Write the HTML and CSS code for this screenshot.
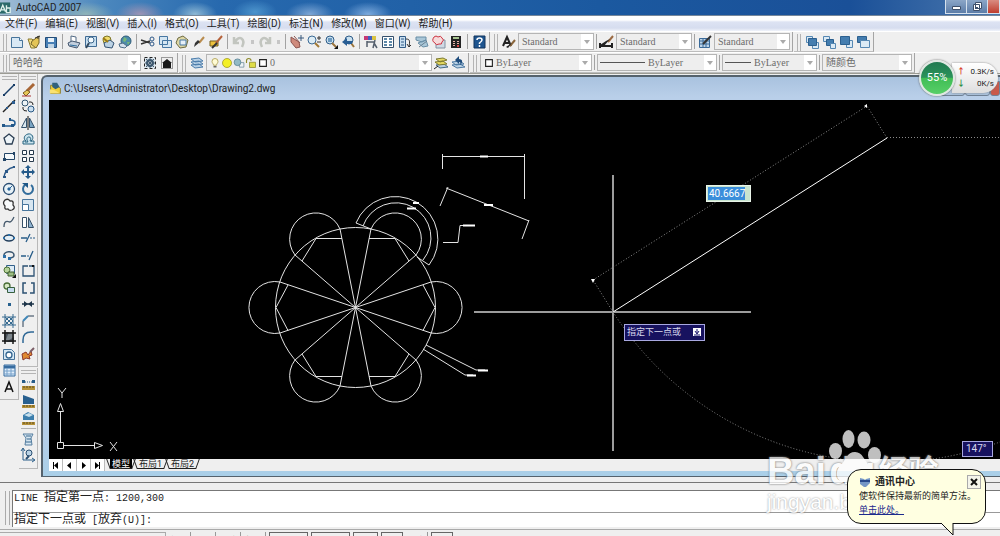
FILE: index.html
```
<!DOCTYPE html>
<html lang="zh-CN">
  <head>
    <meta charset="UTF-8" />
    <meta name="viewport" content="width=device-width, initial-scale=1.0" />
    <title>AutoCAD 2007</title>
    <link rel="stylesheet" href="styles.css">
  </head>
  <body>
    <!-- 图标库，每个图标都是 16x16 -->
    <svg class="sprite" aria-hidden="true">
      <symbol id="new" viewBox="0 0 16 16"><path d="M2.500 3.500h8l3 3v7h-11z" fill="#d8e8f4" stroke="#47749b"/><path d="M10.500 3.500v3h3" fill="#fff" stroke="#47749b"/></symbol>
      <symbol id="open" viewBox="0 0 16 16"><path d="M2 5h4l1 1h5l-3 8H5z" fill="#efd97c" stroke="#8a7a32"/><path d="M6 7l7-5v7l-3 5-5-4z" fill="#e3c456" stroke="#77672b"/><path d="M9 4l5-2M12 2v3" stroke="#333"/></symbol>
      <symbol id="save" viewBox="0 0 16 16"><path d="M2.500 3.500h11v10h-11z" fill="#477fb5" stroke="#234d78"/><path d="M5 4h6v4H5z" fill="#e8f1f8"/><path d="M5 10h6v4H5z" fill="#c0d4e4"/></symbol>
      <symbol id="print" viewBox="0 0 16 16"><path d="M5 8V2l5 1v5" fill="#fff" stroke="#536b85"/><path d="M2 9l4-2 8 2-3 5-8-2z" fill="#c3cfdd" stroke="#43556d"/><path d="M4 11l7 1" stroke="#2f6e9e"/></symbol>
      <symbol id="preview" viewBox="0 0 16 16"><path d="M2.500 2.500h11v10h-11z" fill="#c8dff0" stroke="#406b94"/><circle cx="8" cy="6" r="3" fill="#f4fbff" stroke="#3d668b"/><path d="M6 9l-3 5" stroke="#33485c" stroke-width="2"/></symbol>
      <symbol id="publish" viewBox="0 0 16 16"><circle cx="7" cy="6" r="4" fill="#f0dc6a" stroke="#7c7428"/><path d="M4 9l6-3 4 3-2 5-7-1z" fill="#bcd2e4" stroke="#335272"/><path d="M3 4l5 4" stroke="#9b7a16" stroke-width="2"/></symbol>
      <symbol id="web" viewBox="0 0 16 16"><circle cx="9" cy="7" r="5" fill="#4b8bab" stroke="#315d7a"/><path d="M7 3l3 2-2 3-2-1zM10 8l3 0-2 3z" fill="#77b777"/><path d="M2 10l4-1 4 3-2 2-5-1z" fill="#d4e1ec" stroke="#4d6d89"/></symbol>
      <symbol id="cut" viewBox="0 0 16 16"><path d="M1 6l9 3M1 10l9-3" stroke="#333" stroke-width="1.500"/><circle cx="12" cy="5" r="2" fill="none" stroke="#2d5787"/><circle cx="12" cy="10" r="2" fill="none" stroke="#2d5787"/></symbol>
      <symbol id="copy" viewBox="0 0 16 16"><path d="M2.500 2.500h8v8h-8zM5.500 6.500h9v7h-9z" fill="#d5e6f2" stroke="#4777a2"/></symbol>
      <symbol id="paste" viewBox="0 0 16 16"><path d="M4 4l5-2 5 4-2 7-6 1-4-5z" fill="#ded7a4" stroke="#6e6b42"/><path d="M6 6h6v5H6z" fill="#e6f0f8" stroke="#4777a2"/></symbol>
      <symbol id="match" viewBox="0 0 16 16"><path d="M13 3L8 9" stroke="#b98c4e" stroke-width="2"/><path d="M9 8l-6 5 1-4 3-3z" fill="#333"/></symbol>
      <symbol id="blockedit" viewBox="0 0 16 16"><path d="M2 7h8v5H2z" fill="#ecc13c" stroke="#745e1a"/><path d="M14 2L8 9" stroke="#b5623b" stroke-width="2"/><path d="M4 14l5-5" stroke="#333" stroke-width="2"/></symbol>
      <symbol id="undo" viewBox="0 0 16 16"><path d="M3 3v6h5M4 8c4-8 11-3 7 5" fill="none" stroke="#c2c5bf" stroke-width="2.500"/></symbol>
      <symbol id="redo" viewBox="0 0 16 16"><path d="M13 3v6H8M12 8c-4-8-11-3-7 5" fill="none" stroke="#c2c5bf" stroke-width="2.500"/></symbol>
      <symbol id="pan" viewBox="0 0 16 16"><path d="M2 3l8 5 1 5-4 1-5-6zM5 2l6 7" fill="#cf8b7d" stroke="#8c5550"/><path d="M12 1v6M9 4h6" stroke="#38597d"/></symbol>
      <symbol id="zoom" viewBox="0 0 16 16"><circle cx="6" cy="6" r="4" fill="#dcecf5" stroke="#3c6a95"/><path d="M9 9l4 4" stroke="#a37a34" stroke-width="2"/><path d="M11 4h4M13 2v4M11 8h4" stroke="#333"/></symbol>
      <symbol id="zoomwin" viewBox="0 0 16 16"><circle cx="7" cy="6" r="4" fill="#c9e0ef" stroke="#2f5c88"/><path d="M5 4h4v4H5z" fill="#6c9abf"/><path d="M9 9l4 4" stroke="#9b743b" stroke-width="2"/><path d="M15 11v4h-4z" fill="#111"/></symbol>
      <symbol id="zoomprev" viewBox="0 0 16 16"><circle cx="9" cy="6" r="4" fill="#c9e0ef" stroke="#2f5c88"/><path d="M11 9l3 4" stroke="#9b743b" stroke-width="2"/><path d="M2 8l5-4v3h5v3H7v2z" fill="#285d93"/></symbol>
      <symbol id="props" viewBox="0 0 16 16"><path d="M1 2h4v4H1z" fill="#c53a75"/><path d="M5 2h4v4H5z" fill="#405fc1"/><path d="M9 2h4v4H9z" fill="#d9c342"/><path d="M4 8h8M12 6l-2 8M11 9l3 5M4 7v6" fill="none" stroke="#55606e" stroke-width="1.500"/></symbol>
      <symbol id="center" viewBox="0 0 16 16"><path d="M2.500 2.500h11v11h-11z" fill="#fff" stroke="#344f6c"/><path d="M4 4h3v2H4zM9 4h3v2H9zM4 7h3v2H4zM9 7h3v2H9zM4 10h3v2H4zM9 10h3v2H9z" fill="#5d88a8"/></symbol>
      <symbol id="palette" viewBox="0 0 16 16"><path d="M2.500 2.500h6v11h-6z" fill="#c9dff0" stroke="#315b86"/><path d="M4 5h3M4 8h3M4 11h3" stroke="#315b86"/><path d="M9 5c4 0 4 2 3 8M10 10l2 3 2-2" fill="none" stroke="#333"/></symbol>
      <symbol id="sheet" viewBox="0 0 16 16"><path d="M2 3h10v3l-4 2-6-2zM4 9l8-3 2 6-5 1z" fill="#aac7d8" stroke="#698ea6"/><path d="M5 13l8-6" stroke="#687f90"/></symbol>
      <symbol id="markup" viewBox="0 0 16 16"><path d="M5 6h9v8H5z" fill="#cfdae4" stroke="#8393a4"/><path d="M3 3q2-2 4 0 3-2 4 1 3 2 0 4 0 3-3 2-3 2-4-1-4-2-1-6z" fill="#f6dada" stroke="#cd3442"/></symbol>
      <symbol id="calc" viewBox="0 0 16 16"><path d="M3 2h10v12H3z" fill="#222"/><path d="M5 3h6v2H5z" fill="#a7c491"/><path d="M5 7h2v1H5zM9 7h2v1H9zM5 9h2v1H5zM9 9h2v1H9zM5 11h2v1H5z" fill="#e5b3a7"/><path d="M9 11h2v2H9z" fill="#d44"/></symbol>
      <symbol id="help" viewBox="0 0 16 16"><path d="M3 2h11v12H3z" fill="#1e558f" stroke="#12355d"/><path d="M6 6q0-2 2.500-2T11 6q0 1-2.500 3v1M8.500 11v2" fill="none" stroke="#fff" stroke-width="1.500"/></symbol>
      <symbol id="textstyle" viewBox="0 0 16 16"><path d="M2 12L6 3l4 9M4 9h5" fill="none" stroke="#222" stroke-width="2"/><path d="M14 6l-5 6" stroke="#8a653b" stroke-width="2"/><path d="M11 9l-4 5-2-1z" fill="#222"/></symbol>
      <symbol id="dimstyle" viewBox="0 0 16 16"><path d="M1 9v5M13 9v5M1 12h12" stroke="#222" stroke-width="2"/><path d="M14 2L9 8" stroke="#9b6a43" stroke-width="2"/><path d="M11 5l-6 7-4-1 6-4z" fill="#222"/></symbol>
      <symbol id="tabstyle" viewBox="0 0 16 16"><path d="M2.500 4.500h10v9h-10zM3 7h9M3 10h9M6 5v8M9 5v8" fill="#bed5e9" stroke="#3b6b9a"/><path d="M14 2L6 10" stroke="#333" stroke-width="2"/></symbol>
      <symbol id="front" viewBox="0 0 16 16"><path d="M2.500 2.500h6v6h-6zM8.500 8.500h6v6h-6z" fill="#dbeaf5" stroke="#5688b3"/><path d="M4.500 4.500h8v7h-8z" fill="#447daf" stroke="#2c608f"/></symbol>
      <symbol id="above" viewBox="0 0 16 16"><path d="M2.500 2.500h6v5h-6z" fill="#dbeaf5" stroke="#5688b3"/><path d="M5.500 5.500h7v6h-7z" fill="#447daf" stroke="#2c608f"/><path d="M9.500 9.500h5v5h-5z" fill="#dbeaf5" stroke="#5688b3"/></symbol>
      <symbol id="back" viewBox="0 0 16 16"><path d="M8.500 6.500h6v7h-6z" fill="#dbeaf5" stroke="#5688b3"/><path d="M2.500 2.500h9v8h-9z" fill="#447daf" stroke="#2c608f"/></symbol>
      <symbol id="under" viewBox="0 0 16 16"><path d="M2.500 2.500h9v6h-9z" fill="#447daf" stroke="#2c608f"/><path d="M5.500 6.500h9v7h-9z" fill="#dbeaf5" stroke="#5688b3"/></symbol>
      <symbol id="gear" viewBox="0 0 16 16"><path d="M2.500 2.500h11v11h-11z" fill="#dde7ee" stroke="#222" stroke-dasharray="3 2"/><circle cx="8" cy="8" r="3" fill="#fff" stroke="#3f596f" stroke-width="2"/><path d="M8 3v10M3 8h10M4 4l8 8M12 4l-8 8" stroke="#3f596f"/></symbol>
      <symbol id="house" viewBox="0 0 16 16"><path d="M2.500 2.500h11v11h-11z" fill="#eee" stroke="#444" stroke-dasharray="1 1"/><path d="M3 8l5-4 5 4h-1v5H4V8z" fill="#181818"/></symbol>
      <symbol id="layers" viewBox="0 0 16 16"><path d="M2 10l8-1 4 3-8 1zM2 7l8-1 4 3-8 1zM2 4l8-1 4 3-8 1z" fill="#b9d2e7" stroke="#4c7dab"/></symbol>
      <symbol id="layermake" viewBox="0 0 16 16"><path d="M3 10l8-1 4 3-8 1z" fill="#b9cfe0" stroke="#456a88"/><path d="M2 7l8-1 4 3-8 1zM3 4l7-1 4 2-7 2z" fill="#e4d860" stroke="#7d7a30"/><path d="M1 14l4-3" stroke="#222"/></symbol>
      <symbol id="layerprev" viewBox="0 0 16 16"><path d="M2 10l8-1 5 3-8 1zM2 7l8-1 4 3-8 1z" fill="#bcd3e6" stroke="#4e7ba4"/><path d="M5 5l4-4v3c4 0 4 4 1 6 1-3 0-3-1-3v2z" fill="#1e4c7c"/></symbol>
      <symbol id="bulb" viewBox="0 0 16 16"><path d="M6 11c0-2-2-3-2-5a4 4 0 018 0c0 2-2 3-2 5z" fill="#fffbd4" stroke="#a2923c"/><path d="M6 13h4" stroke="#666" stroke-width="2"/></symbol>
      <symbol id="sun" viewBox="0 0 16 16"><circle cx="8" cy="8" r="6" fill="#f3ef26" stroke="#9b9420"/></symbol>
      <symbol id="sunvp" viewBox="0 0 16 16"><path d="M8.500 7.500h6v6h-6z" fill="#edf3f6" stroke="#6a8799"/><circle cx="6" cy="7" r="4.500" fill="#93bac6" stroke="#567f91"/></symbol>
      <symbol id="lock" viewBox="0 0 16 16"><path d="M2 8V5q0-3 3-3t3 3" fill="none" stroke="#8d8a2c" stroke-width="1.500"/><path d="M6 7h8v7H6z" fill="#dfdc47" stroke="#8d8a2c"/></symbol>
      <symbol id="swatch" viewBox="0 0 16 16"><path d="M3.500 3.500h9v9h-9z" fill="#fff" stroke="#222" stroke-width="1.500"/></symbol>

      <symbol id="line" viewBox="0 0 16 16"><path d="M3 13L13 3" stroke="#173c66" stroke-width="1.500"/><path d="M2 12h2v2H2zM12 2h2v2h-2z" fill="#173c66"/></symbol>
      <symbol id="xline" viewBox="0 0 16 16"><path d="M2 14L14 2" stroke="#222" stroke-width="1.500"/><path d="M5 9h2v2H5zM11 3h3v3h-3z" fill="#2b5d91"/></symbol>
      <symbol id="pline" viewBox="0 0 16 16"><path d="M3 11h8q3 0 3-3t-5-3" fill="none" stroke="#1f5b93" stroke-width="1.500"/><path d="M1 9h3v3H1zM10 9h3v3h-3zM8 3h2v3H8z" fill="#235788"/></symbol>
      <symbol id="polygon" viewBox="0 0 16 16"><path d="M8 3l5 4-2 6H5L3 7z" fill="#edf4f8" stroke="#2b3e53" stroke-width="1.300"/></symbol>
      <symbol id="rect" viewBox="0 0 16 16"><path d="M3.500 5.500h10v6h-10z" fill="#f4f8fa" stroke="#234567"/><path d="M2 10h3v3H2zM12 4h2v3h-2z" fill="#234567"/></symbol>
      <symbol id="arc" viewBox="0 0 16 16"><path d="M3 13Q4 5 13 3" fill="none" stroke="#2b5888" stroke-width="1.500"/><path d="M2 12h3v2H2zM4 6h3v3H4zM12 2h2v2h-2z" fill="#2b5888"/></symbol>
      <symbol id="circle" viewBox="0 0 16 16"><circle cx="8" cy="8" r="5.500" fill="#e8f2f7" stroke="#274b71" stroke-width="1.300"/><path d="M8 8l3-3M7 7h2v2H7z" fill="#27649b" stroke="#27649b"/></symbol>
      <symbol id="cloud" viewBox="0 0 16 16"><path d="M4 3q3-2 5 1 4-1 3 4 3 3-1 5-3 1-4-1-4 1-3-3-3-3 0-6z" fill="#f8fafb" stroke="#333" stroke-width="1.300"/></symbol>
      <symbol id="spline" viewBox="0 0 16 16"><path d="M3 13C3 5 8 8 9 8s2-1 4-5" fill="none" stroke="#43576a" stroke-width="1.300"/></symbol>
      <symbol id="ellipse" viewBox="0 0 16 16"><ellipse cx="8" cy="8" rx="5" ry="3" fill="#e2edf4" stroke="#223e5c" stroke-width="1.500"/><path d="M2 7h2v2H2zM12 7h2v2h-2zM7 4h2v2H7z" fill="#2e70a8"/></symbol>
      <symbol id="ellarc" viewBox="0 0 16 16"><path d="M3 9C2 4 13 3 13 8q0 3-5 3" fill="none" stroke="#3a5670" stroke-width="1.500"/><path d="M2 8h3v3H2zM7 10h3v3H7z" fill="#2e70a8"/></symbol>
      <symbol id="insert" viewBox="0 0 16 16"><path d="M5.500 2.500h8v8h-8z" fill="#deecf6" stroke="#315f8a"/><circle cx="6" cy="7" r="3" fill="#b6d39a" stroke="#4f7337"/><path d="M7 9h6v4H7z" fill="#9dbd82" stroke="#416031"/><path d="M15 11v4h-4z" fill="#111"/></symbol>
      <symbol id="block" viewBox="0 0 16 16"><circle cx="6" cy="6" r="3" fill="#d8e8c5" stroke="#496d35" stroke-width="1.300"/><path d="M6.500 7.500h7v5h-7z" fill="#c7dcf0" stroke="#37603d"/></symbol>
      <symbol id="point" viewBox="0 0 16 16"><path d="M7 7h3v3H7z" fill="#26608e"/></symbol>
      <symbol id="hatch" viewBox="0 0 16 16"><path d="M4 1v14M12 1v14M1 4h14M1 12h14M4 8l4-4M4 12l8-8M8 12l4-4M4 4l8 8M8 4l4 4M4 8l4 4" stroke="#376b91"/></symbol>
      <symbol id="gradient" viewBox="0 0 16 16"><path d="M3 3h10v10H3z" fill="#49525b"/><path d="M8 3h5v5L5 13H4z" fill="#7c858b"/><path d="M4 1v14M12 1v14M1 4h14M1 12h14" stroke="#191919" stroke-width="1.500"/></symbol>
      <symbol id="region" viewBox="0 0 16 16"><path d="M2.500 3.500h8l3 3v7h-11z" fill="#d6e8f4" stroke="#477399"/><circle cx="8" cy="9" r="3" fill="#fff" stroke="#32648f" stroke-width="1.300"/></symbol>
      <symbol id="table" viewBox="0 0 16 16"><path d="M3 3h11v11H3z" fill="#e0eefb" stroke="#376ca0"/><path d="M3 5h11" stroke="#376ca0" stroke-width="3"/><path d="M6 6v8M10 6v8M3 9h11M3 12h11" stroke="#76a1ca"/></symbol>
      <symbol id="mtext" viewBox="0 0 16 16"><path d="M4 13L8 3l4 10M5 10h6" fill="none" stroke="#111" stroke-width="1.500"/></symbol>

      <symbol id="erase" viewBox="0 0 16 16"><path d="M14 2L7 9" stroke="#a96736" stroke-width="3"/><path d="M3 11l4-3 3 2-4 4z" fill="#e5c758" stroke="#7b5a22"/><path d="M2 14h9" stroke="#a33"/></symbol>
      <symbol id="copyobj" viewBox="0 0 16 16"><circle cx="5" cy="5" r="3" fill="#edf3f6" stroke="#30536f"/><circle cx="11" cy="11" r="3" fill="#cce0f0" stroke="#285783"/><path d="M9 4h2q2 0 2 3M3 9v2q0 2 4 2" fill="none" stroke="#222"/></symbol>
      <symbol id="mirror" viewBox="0 0 16 16"><path d="M6.500 3v9.500h-5z" fill="#dbe8f0" stroke="#34516b"/><path d="M9.500 3v9.500h5z" fill="#7ba6c5" stroke="#34516b"/><path d="M8 1v14" stroke="#111"/></symbol>
      <symbol id="offset" viewBox="0 0 16 16"><path d="M3 13h11v-3H11c4-3 1-8-3-7S3 8 6 10H3z" fill="#cce4ee" stroke="#296480"/><path d="M5 11h3c-2-3-1-5 1-5s2 2 1 4h2" fill="none" stroke="#296480"/></symbol>
      <symbol id="array" viewBox="0 0 16 16"><path d="M2.500 2.500h4v4h-4zM9.500 2.500h4v4h-4zM2.500 9.500h4v4h-4zM9.500 9.500h4v4h-4z" fill="#fff" stroke="#26394b"/></symbol>
      <symbol id="move" viewBox="0 0 16 16"><path d="M8 3v10M3 8h10" stroke="#255a89" stroke-width="2"/><path d="M8 1l3 3H5zM8 15l3-3H5zM1 8l3-3v6zM15 8l-3-3v6z" fill="#255a89"/></symbol>
      <symbol id="rotate" viewBox="0 0 16 16"><path d="M5 4a5 5 0 106 0" fill="none" stroke="#326d9c" stroke-width="2"/><path d="M2 2h6v5z" fill="#1f5787"/></symbol>
      <symbol id="scale" viewBox="0 0 16 16"><path d="M2.500 2.500h11v11h-11z" fill="#d7e6f1" stroke="#47759c"/><path d="M2.500 7.500h6v6h-6z" fill="#fff" stroke="#47759c"/></symbol>
      <symbol id="stretch" viewBox="0 0 16 16"><path d="M2.500 3.500h4v10h-4z" fill="#fff" stroke="#365068"/><path d="M8.500 3.500l5 10h-5z" fill="#8db1cf" stroke="#365068"/></symbol>
      <symbol id="trim" viewBox="0 0 16 16"><path d="M1 8h6M10 4L6 12" stroke="#285d89" stroke-width="1.300"/><path d="M10 8h5" stroke="#285d89" stroke-dasharray="2 1"/></symbol>
      <symbol id="extend" viewBox="0 0 16 16"><path d="M1 9h5M13 4l-4 9" stroke="#285d89" stroke-width="1.300"/><path d="M7 9h4" stroke="#285d89" stroke-dasharray="2 1"/></symbol>
      <symbol id="breakpt" viewBox="0 0 16 16"><path d="M8 3H3v10h11V3H9" fill="none" stroke="#2d5273" stroke-width="1.300"/><path d="M12 2h2v2h-2z" fill="#111"/></symbol>
      <symbol id="break" viewBox="0 0 16 16"><path d="M6 3H3v10h11V3h-3" fill="none" stroke="#2d5273" stroke-width="1.500"/><path d="M7 12h3v2H7z" fill="#efefef"/></symbol>
      <symbol id="join" viewBox="0 0 16 16"><path d="M2 8h12" stroke="#1d3449" stroke-width="1.500"/><path d="M4 5l4 3-4 3zM12 5L8 8l4 3z" fill="#1d3449"/></symbol>
      <symbol id="chamfer" viewBox="0 0 16 16"><path d="M3 14V8l5-5h6" fill="none" stroke="#2a3f54"/><path d="M3 8l5-5" stroke="#4187b8" stroke-width="2"/></symbol>
      <symbol id="fillet" viewBox="0 0 16 16"><path d="M3 14V11q0-8 8-8h3" fill="none" stroke="#2f6896" stroke-width="1.500"/></symbol>
      <symbol id="explode" viewBox="0 0 16 16"><path d="M2 8l4-2 2 3 3-4 1 4-3 1 1 3-4-1-3 2z" fill="#e08b32" stroke="#8d392c"/><path d="M10 6l4-4" stroke="#7b5d66" stroke-width="2"/></symbol>
      <symbol id="dist" viewBox="0 0 16 16"><path d="M3 5h11" stroke="#285d89" stroke-dasharray="1 1"/><path d="M2 3h3v3H2zM12 3h3v3h-3z" fill="#285d89"/><path d="M2 9h13v4H2z" fill="#b5923a"/><path d="M4 9v2M7 9v2M10 9v2M13 9v2" stroke="#5d4b1e"/></symbol>
      <symbol id="area" viewBox="0 0 16 16"><path d="M3 2l11 4v5H3z" fill="#28608f"/><path d="M2 12h13v3H2z" fill="#b5923a"/><path d="M4 12v2M7 12v2M10 12v2M13 12v2" stroke="#5d4b1e"/></symbol>
      <symbol id="mass" viewBox="0 0 16 16"><path d="M3 5l5-3 6 3v5H3z" fill="#3c7eac"/><path d="M4 5l5-2 4 2-4 2z" fill="#c6dfec"/><path d="M2 12h13v3H2z" fill="#b5923a"/><path d="M4 12v2M7 12v2M10 12v2M13 12v2" stroke="#5d4b1e"/></symbol>
      <symbol id="list" viewBox="0 0 16 16"><path d="M3 3h10l-2 4 1 7H5l1-7z" fill="#d6e6f1" stroke="#547d9f"/><path d="M6 5h5M7 8h4M6 11h5" stroke="#37678d"/></symbol>
      <symbol id="idpoint" viewBox="0 0 16 16"><path d="M3 2v11h11M1 4l2-3 2 3M12 11l3 2-3 2" fill="none" stroke="#2a5e89"/><circle cx="9" cy="6" r="3" fill="#bad3e5" stroke="#2a4e71"/><path d="M9 9l-3 3" stroke="#2a4e71" stroke-width="2"/></symbol>
      <symbol id="dwg" viewBox="0 0 16 16"><path d="M2 4h8l4 4v6H2z" fill="#f0cf3a" stroke="#80701f"/><path d="M4 1h6l3 5-5 3-4-3z" fill="#31617c"/><path d="M1 9l6 1 7 4H1z" fill="#fae272"/></symbol>
    </svg>

    <div class="app">
      <!-- 标题栏 -->
      <header class="titlebar">
        <svg class="logo" viewBox="0 0 13 14" aria-hidden="true"><path d="M0 1h11v12H0z" fill="#2b6a6a"/><path d="M0 11l3-7 3 7M1 9h4M7 4v8h4V7H7" fill="none" stroke="#dff1ec" stroke-width="1.500"/></svg>
        <h1>AutoCAD 2007</h1>
        <div class="winbtns">
          <button title="最小化"><svg viewBox="0 0 20 14"><path d="M6.500 6.500h8v3h-8z" fill="#fff" stroke="#3e506b"/></svg></button>
          <button title="还原"><svg viewBox="0 0 20 14"><path d="M8.500 2.500h6v6h-6zM6.500 4.500h6v6h-6z" fill="#fff" stroke="#3e506b"/><path d="M8 7h3v2H8z" fill="#3e506b"/></svg></button>
          <button title="关闭" class="close"></button>
        </div>
      </header>

      <!-- 菜单 -->
      <nav class="menu">
        <button>文件(F)</button>
        <button>编辑(E)</button>
        <button>视图(V)</button>
        <button>插入(I)</button>
        <button>格式(O)</button>
        <button>工具(T)</button>
        <button>绘图(D)</button>
        <button>标注(N)</button>
        <button>修改(M)</button>
        <button>窗口(W)</button>
        <button>帮助(H)</button>
      </nav>

      <!-- 工具栏第一行 -->
      <div class="row">
        <div class="bar">
          <button title="新建"><svg><use href="#new"/></svg></button>
          <button title="打开"><svg><use href="#open"/></svg></button>
          <button title="保存"><svg><use href="#save"/></svg></button>
          <i class="sep"></i>
          <button title="打印"><svg><use href="#print"/></svg></button>
          <button title="打印预览"><svg><use href="#preview"/></svg></button>
          <button title="发布"><svg><use href="#publish"/></svg></button>
          <button title="三维 DWF"><svg><use href="#web"/></svg></button>
          <i class="sep"></i>
          <button title="剪切"><svg><use href="#cut"/></svg></button>
          <button title="复制"><svg><use href="#copy"/></svg></button>
          <button title="粘贴"><svg><use href="#paste"/></svg></button>
          <button title="特性匹配"><svg><use href="#match"/></svg></button>
          <button title="块编辑器"><svg><use href="#blockedit"/></svg></button>
          <i class="sep"></i>
          <button title="放弃"><svg><use href="#undo"/></svg></button>
          <button title="放弃列表" class="drop"></button>
          <button title="重做"><svg><use href="#redo"/></svg></button>
          <button title="重做列表" class="drop"></button>
          <i class="sep"></i>
          <button title="实时平移"><svg><use href="#pan"/></svg></button>
          <button title="实时缩放"><svg><use href="#zoom"/></svg></button>
          <button title="窗口缩放"><svg><use href="#zoomwin"/></svg></button>
          <button title="缩放上一个"><svg><use href="#zoomprev"/></svg></button>
          <i class="sep"></i>
          <button title="特性"><svg><use href="#props"/></svg></button>
          <button title="设计中心"><svg><use href="#center"/></svg></button>
          <button title="工具选项板"><svg><use href="#palette"/></svg></button>
          <button title="图纸集"><svg><use href="#sheet"/></svg></button>
          <button title="标记集"><svg><use href="#markup"/></svg></button>
          <button title="快速计算器"><svg><use href="#calc"/></svg></button>
          <i class="sep"></i>
          <button title="帮助"><svg><use href="#help"/></svg></button>
        </div>
        <div class="bar styles">
          <button title="文字样式"><svg><use href="#textstyle"/></svg></button>
          <div class="combo style"><select aria-label="文字样式"><option>Standard</option></select></div>
          <i class="sep"></i>
          <button title="标注样式"><svg><use href="#dimstyle"/></svg></button>
          <div class="combo style"><select aria-label="标注样式"><option>Standard</option></select></div>
          <i class="sep"></i>
          <button title="表格样式"><svg><use href="#tabstyle"/></svg></button>
          <div class="combo style"><select aria-label="表格样式"><option>Standard</option></select></div>
        </div>
        <div class="bar">
          <button title="前置"><svg><use href="#front"/></svg></button>
          <button title="置于对象之上"><svg><use href="#above"/></svg></button>
          <button title="后置"><svg><use href="#back"/></svg></button>
          <button title="置于对象之下"><svg><use href="#under"/></svg></button>
        </div>
      </div>

      <!-- 工具栏第二行 -->
      <div class="row">
        <div class="bar">
          <div class="combo space"><select aria-label="工作空间"><option>哈哈哈</option></select></div>
          <button title="工作空间设置"><svg><use href="#gear"/></svg></button>
          <button title="我的工作空间"><svg><use href="#house"/></svg></button>
        </div>
        <div class="bar">
          <button title="图层特性管理器"><svg><use href="#layers"/></svg></button>
          <div class="combo layer">
            <svg><use href="#bulb"/></svg>
            <svg><use href="#sun"/></svg>
            <svg><use href="#sunvp"/></svg>
            <svg><use href="#lock"/></svg>
            <svg><use href="#swatch"/></svg>
            <select aria-label="图层"><option>0</option></select>
          </div>
          <button title="置为当前图层"><svg><use href="#layermake"/></svg></button>
          <button title="上一个图层"><svg><use href="#layerprev"/></svg></button>
        </div>
        <div class="bar styles">
          <div class="combo color"><svg><use href="#swatch"/></svg><select aria-label="颜色"><option>ByLayer</option></select></div>
          <i class="sep"></i>
          <div class="combo ltype"><i class="dash"></i><select aria-label="线型"><option>ByLayer</option></select></div>
          <i class="sep"></i>
          <div class="combo lweight"><i class="dash short"></i><select aria-label="线宽"><option>ByLayer</option></select></div>
          <i class="sep"></i>
          <div class="combo plot"><select aria-label="打印样式"><option>随颜色</option></select></div>
        </div>
      </div>

      <!-- 主工作区 -->
      <main class="work">
        <div class="dock">
          <div class="vbar">
            <button title="直线"><svg><use href="#line"/></svg></button>
            <button title="构造线"><svg><use href="#xline"/></svg></button>
            <button title="多段线"><svg><use href="#pline"/></svg></button>
            <button title="正多边形"><svg><use href="#polygon"/></svg></button>
            <button title="矩形"><svg><use href="#rect"/></svg></button>
            <button title="圆弧"><svg><use href="#arc"/></svg></button>
            <button title="圆"><svg><use href="#circle"/></svg></button>
            <button title="修订云线"><svg><use href="#cloud"/></svg></button>
            <button title="样条曲线"><svg><use href="#spline"/></svg></button>
            <button title="椭圆"><svg><use href="#ellipse"/></svg></button>
            <button title="椭圆弧"><svg><use href="#ellarc"/></svg></button>
            <button title="插入块"><svg><use href="#insert"/></svg></button>
            <button title="创建块"><svg><use href="#block"/></svg></button>
            <button title="点"><svg><use href="#point"/></svg></button>
            <button title="图案填充"><svg><use href="#hatch"/></svg></button>
            <button title="渐变色"><svg><use href="#gradient"/></svg></button>
            <button title="面域"><svg><use href="#region"/></svg></button>
            <button title="表格"><svg><use href="#table"/></svg></button>
            <button title="多行文字"><svg><use href="#mtext"/></svg></button>
          </div>
        </div>
        <div class="dock">
          <div class="vbar">
            <button title="删除"><svg><use href="#erase"/></svg></button>
            <button title="复制"><svg><use href="#copyobj"/></svg></button>
            <button title="镜像"><svg><use href="#mirror"/></svg></button>
            <button title="偏移"><svg><use href="#offset"/></svg></button>
            <button title="阵列"><svg><use href="#array"/></svg></button>
            <button title="移动"><svg><use href="#move"/></svg></button>
            <button title="旋转"><svg><use href="#rotate"/></svg></button>
            <button title="缩放"><svg><use href="#scale"/></svg></button>
            <button title="拉伸"><svg><use href="#stretch"/></svg></button>
            <button title="修剪"><svg><use href="#trim"/></svg></button>
            <button title="延伸"><svg><use href="#extend"/></svg></button>
            <button title="打断于点"><svg><use href="#breakpt"/></svg></button>
            <button title="打断"><svg><use href="#break"/></svg></button>
            <button title="合并"><svg><use href="#join"/></svg></button>
            <button title="倒角"><svg><use href="#chamfer"/></svg></button>
            <button title="圆角"><svg><use href="#fillet"/></svg></button>
            <button title="分解"><svg><use href="#explode"/></svg></button>
          </div>
          <div class="vbar">
            <button title="距离"><svg><use href="#dist"/></svg></button>
            <button title="面积"><svg><use href="#area"/></svg></button>
            <button title="面域/质量特性"><svg><use href="#mass"/></svg></button>
            <i class="hsep"></i>
            <button title="列表"><svg><use href="#list"/></svg></button>
            <button title="定位点"><svg><use href="#idpoint"/></svg></button>
          </div>
        </div>

        <!-- 图形窗口 -->
        <section class="drawing">
          <div class="caption">
            <svg><use href="#dwg"/></svg>
            <h2>C:\Users\Administrator\Desktop\Drawing2.dwg</h2>
            <div class="childbtns">
              <button title="最小化"></button>
              <button title="最大化"></button>
              <button title="关闭" class="close"></button>
            </div>
          </div>
          <div class="canvas">
            <svg class="model">
              <g transform="translate(-49 -100)" fill="none" stroke="#e4e4e4">
                <!-- 圆桌 -->
                <circle cx="355.500" cy="307.500" r="80"/>
                <path d="M355.500 307.500L340 229M355.500 307.500L371 229M355.500 307.500L295 255M355.500 307.500L416 255M355.500 307.500L280 282M355.500 307.500L280 333M355.500 307.500L431 282M355.500 307.500L431 333M355.500 307.500L295 360M355.500 307.500L416 360M355.500 307.500L340 386M355.500 307.500L371 386"/>
                <path d="M302 261l14-22.500h26M409 261l-14-22.500h-26M302 354l14 22.500h26M409 354l-14 22.500h-26M288 285l-12 22.500 12 23M423 285l12 22.500-12 23"/>
                <!-- 椅子 -->
                <path d="M340 229A26.200 26.200 0 1 0 295 255M371 229A26.200 26.200 0 1 1 416 255M280 282A26 26 0 1 0 280 333M431 282A26 26 0 1 1 431 333M295 360A26.200 26.200 0 1 0 340 386M416 360A26.200 26.200 0 1 1 371 386"/>
                <!-- 弧长标注 -->
                <path d="M363 226A35 35 0 1 1 423 260M356 223A42.500 42.500 0 1 1 429 265M356 223l15 6M417 257l12 8"/>
                <!-- 线性标注 -->
                <path d="M442.500 154v15M442 156.500h83M524.500 154v45M440 206l8-19M446 188l83 33M522 239l7-19M443 242.500h15l2-17h14M426 345l50 25h9M423 349l42 26h8"/>
                <path d="M480 156.500h8M484 205h9M463 225.500h12M413 203h6M407 208.500h9M478 370.500h10M467 375.500h9" stroke="#fff" stroke-width="2"/>
                <!-- 十字光标 -->
                <path d="M613 175v276M474 312h277" stroke="#9c9c9c" stroke-width="2"/>
                <path d="M613 312L887 138" stroke="#fff"/>
                <g stroke="#8a8a8a" stroke-dasharray="1 2">
                  <path d="M593 280L867 106M613 312l-20-32M887 138l-20-32M887 137.500h800"/>
                  <path d="M613 312A325 325 0 0 0 1161 312"/>
                </g>
                <path d="M591 279h4l-2 4zM867 104v4l-3-2z" fill="#fff" stroke="none"/>
                <!-- 坐标系图标 -->
                <path d="M57.500 442.500h6v6h-6zM60.500 442v-30M57.500 411.500h6l-3-8zM64 445.500h30M94.500 442.500v6l8-3z"/>
                <path d="M58 388l4 5 4-5M62 393v5M110 442l7 9M117 442l-7 9"/>
              </g>
            </svg>
            <input class="dyn" aria-label="长度" value="40.6667">
            <div class="hint">指定下一点或 <svg viewBox="0 0 8 8"><path d="M0 0h8v8H0z" fill="#fff"/><path d="M4 1v4M2 3l2 3 2-3M1 7h6" fill="none" stroke="#17126c"/></svg></div>
            <div class="angle">147°</div>
          </div>
          <div class="tabs">
            <button title="第一个"><svg viewBox="0 0 13 11"><path d="M4 2h1v7H4zM9 2v7L5 5.500z"/></svg></button>
            <button title="上一个"><svg viewBox="0 0 13 11"><path d="M8 2v7L4 5.500z"/></svg></button>
            <button title="下一个"><svg viewBox="0 0 13 11"><path d="M5 2v7l4-3.500z"/></svg></button>
            <button title="最后一个"><svg viewBox="0 0 13 11"><path d="M4 2v7l4-3.500zM8 2h1v7H8z"/></svg></button>
            <a href="#" class="tab active">模型</a>
            <a href="#" class="tab">布局1</a>
            <a href="#" class="tab">布局2</a>
          </div>
        </section>
      </main>

      <!-- 命令行 -->
      <section class="command">
        <div class="console">
          <p>LINE <b>指定第一点</b>: 1200,300</p>
          <div class="prompt">
            <label for="cmd"><b>指定下一点或</b> [<b>放弃</b>(U)]:</label>
            <input id="cmd">
          </div>
        </div>
      </section>

      <!-- 状态栏 -->
      <footer class="status">
        <output class="coords"></output>
        <button>捕捉</button>
        <button>栅格</button>
        <button>正交</button>
        <button>极轴</button>
        <button class="on wide">对象捕捉</button>
        <button class="on wide">对象追踪</button>
        <button class="on">DUCS</button>
        <button class="on">DYN</button>
        <button>线宽</button>
        <button class="on">模型</button>
      </footer>
    </div>

    <!-- 水印 -->
    <div class="watermark">
      <svg viewBox="0 0 52 54" aria-hidden="true"><g fill="#fff"><ellipse cx="6.500" cy="21" rx="6.500" ry="8"/><ellipse cx="19.500" cy="9" rx="6" ry="9"/><ellipse cx="35" cy="10" rx="6.500" ry="8.500"/><ellipse cx="45.500" cy="25" rx="6.500" ry="8"/><path d="M26 22c8 0 9 9 15 14 6 6 3 17-6 16-6-1-12-1-18 0-9 1-12-9-6-16 6-6 7-14 15-14z"/></g></svg>
      <div class="brand"><span>Bai</span><span>du</span><span class="cn">经验</span></div>
      <div class="site">jingyan.baidu.com</div>
    </div>

    <!-- 网速悬浮球 -->
    <aside class="meter">
      <div class="ball">55%</div>
      <dl>
        <dt class="up">↑</dt><dd>0.3K/s</dd>
        <dt class="down">↓</dt><dd>0K/s</dd>
      </dl>
    </aside>

    <!-- 通讯中心气泡 -->
    <aside class="balloon">
      <header>
        <svg viewBox="0 0 12 12" aria-hidden="true"><path d="M1 2l4 1 1 1 1-1 4-1v5l-4 4H5L1 8z" fill="#7496c5"/><path d="M1 4h10v2H1z" fill="#28498b"/></svg>
        <h3>通讯中心</h3>
        <button title="关闭"><svg viewBox="0 0 12 12"><path d="M3 3l6 6M9 3L3 9" stroke="#111" stroke-width="2"/></svg></button>
      </header>
      <p>使软件保持最新的简单方法。</p>
      <a href="#">单击此处。</a>
      <svg class="tail" viewBox="0 0 16 13" aria-hidden="true"><path d="M1 0l12 12V0" fill="#ffffe1" stroke="#111"/></svg>
    </aside>
  </body>
</html>
```
FILE: styles.css
```
/* 样式初始化 */
* {
  margin: 0;
  padding: 0;
  box-sizing: border-box;
}
body {
  overflow: hidden;
  font-family: Roboto, "Noto Sans CJK SC", sans-serif;
  font-size: 10px;
  color: #222;
}
button,
select,
input {
  font: inherit;
  color: inherit;
  border: 0;
  background: none;
}
svg {
  display: block;
  flex: none;
}
.sprite {
  position: absolute;
  width: 0;
  height: 0;
}
.app {
  height: 100vh;
  display: flex;
  flex-direction: column;
  background-color: #efefef;
}

/* 标题栏 */
.titlebar {
  flex: none;
  height: 15px;
  display: flex;
  align-items: center;
  gap: 4px;
  background:
    radial-gradient(ellipse 28px 12px at 86px 14px, #8fb3b8, transparent),
    radial-gradient(ellipse 24px 12px at 140px 14px, #9a93b4, transparent),
    radial-gradient(ellipse 22px 12px at 195px 14px, #8db8d4, transparent),
    radial-gradient(ellipse 22px 12px at 255px 12px, #4c94cc, transparent),
    radial-gradient(ellipse 24px 12px at 310px 14px, #7ba5d4, transparent),
    radial-gradient(ellipse 24px 12px at 368px 14px, #7ba9dc, transparent),
    linear-gradient(to right, #a3bed5, #4c88be 100px, #2769ae 220px, #1b59a0 60%, #1a5098 85%, #4b78ae);
}
.titlebar .logo {
  width: 12px;
  height: 14px;
}
.titlebar h1 {
  font-size: 10px;
  font-weight: normal;
  line-height: 15px;
}
.winbtns {
  margin-left: auto;
  align-self: flex-start;
  display: flex;
  border-left: 1px solid #d5e1ed;
}
.winbtns button {
  width: 21px;
  height: 14px;
  overflow: hidden;
  background: linear-gradient(#8ba6c7, #5c7da8);
  border-right: 1px solid #d5e1ed;
  border-bottom: 1px solid #d5e1ed;
}
.winbtns svg {
  width: 20px;
  height: 14px;
}
.winbtns .close {
  width: 12px;
  background: linear-gradient(#d98c81, #bf3d2e);
}

/* 菜单 */
.menu {
  flex: none;
  height: 16px;
  display: flex;
  gap: 8px;
  padding-left: 5px;
  border-top: 1px solid #77889b;
  background: linear-gradient(#fff 4px, #dde3f3 6px, #d6ddef 12px, #f0f3fa);
}
.menu button {
  line-height: 15px;
  white-space: nowrap;
}

/* 横向工具栏 */
.row {
  flex: none;
  display: flex;
  height: 21px;
  border-top: 1px solid #fff;
}
.bar {
  display: flex;
  align-items: center;
  gap: 1px;
  padding: 0 2px 0 9px;
  border-right: 1px solid #a5a5a5;
  border-bottom: 1px solid #bdbdbd;
  /* 左侧的两条拖动把手 */
  background:
    linear-gradient(#b4b4b4, #b4b4b4) 3px 2px / 1px 17px no-repeat,
    linear-gradient(#b4b4b4, #b4b4b4) 6px 2px / 1px 17px no-repeat;
}
.bar + .bar {
  padding-left: 10px;
  margin-left: 1px;
}
.bar button,
.bar button svg {
  width: 16px;
  height: 16px;
}
.bar .drop {
  width: 8px;
  background: linear-gradient(#c6c6c6, #c6c6c6) 3px 6px / 3px 4px no-repeat;
}
.sep {
  width: 1px;
  height: 15px;
  margin: 0 2px;
  background-color: #a3a3a3;
}
.styles .sep {
  margin: 0 1px;
}

/* 下拉框 */
.combo {
  height: 17px;
  display: flex;
  align-items: center;
  padding-left: 2px;
  border: 1px solid #b5b5b5;
  background-color: #eee;
  font-family: "Liberation Serif", "Noto Sans CJK SC", serif;
  color: #6b6b6b;
}
.combo svg {
  width: 12px;
  height: 12px;
}
.combo select {
  flex: 1;
  min-width: 0;
  height: 15px;
  padding-left: 1px;
  appearance: none;
  border-radius: 0;
  background:
    url("data:image/svg+xml,%3Csvg xmlns='http://www.w3.org/2000/svg' width='12' height='15'%3E%3Cpath d='M0 0h12v15H0z' fill='%23fff'/%3E%3Cpath d='M3 6h6l-3 4z' fill='%23aaa'/%3E%3C/svg%3E") right / 12px 15px no-repeat;
}
.style { width: 76px; }
.space { width: 132px; }
.layer { width: 226px; }
.color { width: 112px; }
.ltype { width: 120px; }
.lweight { width: 95px; }
.plot { width: 90px; }
.dash {
  width: 45px;
  height: 1px;
  margin-right: 2px;
  background-color: #555;
}
.dash.short {
  width: 26px;
}

/* 主工作区 */
.work {
  flex: 1;
  min-height: 0;
  display: flex;
  border-top: 1px solid #9c9c94;
}
.dock {
  flex: none;
  width: 19px;
}
.vbar {
  display: flex;
  flex-direction: column;
  align-items: center;
  padding: 8px 0 4px;
  border-right: 1px solid #b8b8b8;
  border-bottom: 1px solid #b8b8b8;
  background:
    linear-gradient(#b4b4b4, #b4b4b4) 2px 2px / 15px 1px no-repeat,
    linear-gradient(#b4b4b4, #b4b4b4) 2px 5px / 15px 1px no-repeat;
}
.vbar + .vbar {
  padding-top: 9px;
  margin-top: 1px;
}
.vbar button,
.vbar button svg {
  width: 16px;
  height: 16px;
}
.vbar button:nth-child(even) {
  margin-bottom: 1px;
}
.hsep {
  width: 15px;
  height: 1px;
  margin: 2px 0;
  background-color: #b0b0b0;
}

/* 图形窗口 */
.drawing {
  flex: 1;
  min-width: 0;
  display: flex;
  flex-direction: column;
  margin: 1px 0 0 3px;
  padding: 0 0 5px 6px;
  border: solid #55626d;
  border-width: 2px 0 1px 2px;
  border-top-left-radius: 6px;
  background: linear-gradient(#a9c2df, #b9cfe9 20px, #b5cee8 90%, #a9cfe8);
}
.caption {
  flex: none;
  height: 23px;
  display: flex;
  align-items: center;
  gap: 2px;
}
.caption > svg {
  width: 13px;
  height: 13px;
}
.caption h2 {
  font-size: 10px;
  font-weight: normal;
}
.childbtns {
  display: flex;
  margin-left: auto;
  align-self: flex-end;
  margin-bottom: 4px;
}
.childbtns button {
  width: 25px;
  height: 15px;
  border: 1px solid #6f8195;
  border-radius: 0 0 3px 3px;
  background: linear-gradient(#c7d9ee, #a9c1dc);
}
.childbtns .close {
  width: 10px;
  background: #c9594a;
}
.canvas {
  flex: 1;
  min-height: 0;
  position: relative;
  overflow: hidden;
  background-color: #000;
}
.model {
  width: 100%;
  height: 100%;
}
/* 光标附近的动态输入，浮在图形上面 */
.dyn,
.hint,
.angle {
  position: absolute;
  line-height: 14px;
}
.dyn {
  left: 657px;
  top: 85px;
  width: 45px;
  height: 17px;
  padding-left: 2px;
  border: 1px solid #e9f4e9;
  background: linear-gradient(#3a8edb, #3a8edb) 1px 1px / 37px 13px no-repeat #c9e5cf;
  color: #fff;
}
.hint {
  left: 575px;
  top: 224px;
  display: flex;
  align-items: center;
  justify-content: space-between;
  width: 81px;
  padding: 0 3px 1px 2px;
  border: 1px solid #a8a8e0;
  background-color: #17125f;
  color: #d8d8ec;
  font-size: 9px;
}
.hint svg {
  width: 8px;
  height: 8px;
}
.angle {
  right: 7px;
  bottom: 2px;
  width: 31px;
  padding-left: 3px;
  border: 1px solid #a8a8e0;
  background-color: #17125f;
  color: #d8d8ec;
}

/* 模型/布局选项卡 */
.tabs {
  flex: none;
  height: 12px;
  display: flex;
  background-color: #efefef;
}
.tabs button {
  width: 14px;
  border-right: 1px solid #bbb;
  background-color: #fff;
}
.tabs button svg {
  width: 13px;
  height: 11px;
}
.tab {
  position: relative;
  margin-left: 5px;
  padding: 0 2px;
  height: 10px;
  font-size: 9px;
  line-height: 10px;
  color: #222;
  text-decoration: none;
  border-bottom: 1px solid #222;
}
.tab::before,
.tab::after {
  content: "";
  position: absolute;
  top: 0;
  width: 1px;
  height: 10px;
  background-color: #222;
}
.tab::before {
  left: -2px;
  transform: skewX(20deg);
}
.tab::after {
  right: -2px;
  transform: skewX(-20deg);
}
.tab.active {
  background-color: #000;
  color: #fff;
}

/* 命令行 */
.command {
  flex: none;
  margin-top: 5px;
  padding: 7px 0 2px 12px;
  border-top: 1px solid #777;
  border-bottom: 1px solid #aaa;
  background:
    linear-gradient(#aaa, #aaa) 5px 8px / 1px 34px no-repeat,
    linear-gradient(#aaa, #aaa) 9px 8px / 1px 34px no-repeat;
}
.console {
  border: solid #777;
  border-width: 1px 0 0 1px;
  background-color: #fff;
  font-family: "Liberation Mono", "Noto Sans CJK SC", monospace;
}
.console b {
  font-size: 12px;
  font-weight: normal;
}
.console p {
  height: 22px;
  padding-left: 1px;
  line-height: 14px;
  border-bottom: 1px solid #999;
}
.prompt {
  display: flex;
  height: 14px;
  padding-left: 1px;
  line-height: 14px;
}
.prompt input {
  flex: 1;
  outline: 0;
}

/* 状态栏只露出最上面一条 */
.status {
  flex: none;
  display: flex;
  gap: 3px;
  height: 20px;
  margin-bottom: -14px;
  padding-top: 2px;
}
.status .coords {
  width: 166px;
  border: 1px solid #aaa;
  border-left: 0;
}
.status button {
  min-width: 22px;
  font-size: 9px;
  line-height: 12px;
  border-right: 1px solid #999;
}
.status .on {
  border: 1px solid #666;
  padding-top: 3px;
}
.status .wide {
  min-width: 39px;
}

/* 水印 */
.watermark {
  position: absolute;
  left: 767px;
  top: 430px;
  opacity: 0.75;
  color: #fff;
}
.watermark svg {
  position: absolute;
  left: 62px;
  top: 0;
  width: 52px;
  height: 54px;
}
.brand {
  display: flex;
  align-items: center;
  gap: 3px;
  padding-top: 21px;
  font: bold 38px/40px "Liberation Sans", "Noto Sans CJK SC", sans-serif;
  text-shadow: 0 0 2px #666, 0 0 2px #888;
}
.brand .cn {
  font-size: 30px;
}
.site {
  font: 21px/22px "Liberation Sans", sans-serif;
  text-shadow: 0 0 2px #666;
}

/* 网速悬浮球 */
.meter {
  position: absolute;
  right: 2px;
  top: 63px;
  display: flex;
  align-items: center;
}
.ball {
  position: absolute;
  left: -33px;
  width: 36px;
  height: 36px;
  border: 2px solid #e0e8e2;
  border-radius: 50%;
  background: linear-gradient(#207a50, #2b935b 48%, #40bd55 50%, #58cf68);
  box-shadow: 0 0 2px #555;
  color: #fff;
  font-size: 11px;
  line-height: 31px;
  text-align: center;
}
.meter dl {
  display: grid;
  grid-template-columns: 14px 26px;
  padding: 3px 4px 3px 2px;
  border-radius: 0 15px 15px 0;
  background: linear-gradient(#fff, #dedede);
  box-shadow: 0 0 2px #777;
  font-size: 8px;
  line-height: 12px;
}
.meter dt {
  padding-left: 3px;
  font-weight: bold;
}
.meter dd {
  text-align: right;
}
.up {
  color: #d8402c;
}
.down {
  color: #2b8e46;
}

/* 气泡 */
.balloon {
  position: absolute;
  right: 14px;
  bottom: 12px;
  width: 139px;
  padding: 4px 4px 6px 11px;
  border: 1px solid #111;
  border-radius: 14px;
  background-color: #ffffe1;
  font-size: 9px;
  line-height: 14px;
}
.balloon header {
  display: flex;
  align-items: center;
  gap: 4px;
}
.balloon header svg {
  width: 12px;
  height: 12px;
}
.balloon h3 {
  font-size: 10px;
  line-height: 15px;
}
.balloon header button {
  margin-left: auto;
  border: 1px solid #aaa;
  background-color: #f4f4ea;
}
.balloon p {
  white-space: nowrap;
}
.balloon a {
  display: block;
  width: 45px;
  color: #1c2a8c;
}
.balloon .tail {
  position: absolute;
  right: 29px;
  top: 100%;
  width: 16px;
  height: 13px;
}
```
